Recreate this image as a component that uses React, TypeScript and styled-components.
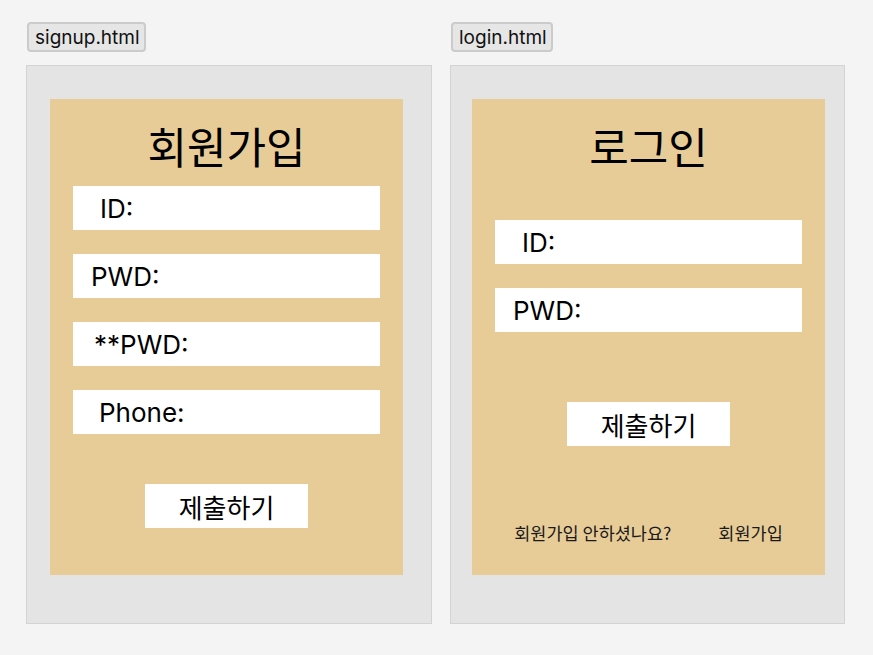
import React from "react";
import styled, { createGlobalStyle } from "styled-components";

const Global = createGlobalStyle`
  html, body { margin: 0; padding: 0; background: #f4f4f4; }
  body { font-family: "Inter", "Noto Sans CJK KR", sans-serif; color: #000; }
`;

const Page = styled.div`
  display: flex;
  gap: 18px;
  padding: 22px 0 0 26px;
  align-items: flex-start;
`;

const Column = styled.div<{ $w: number }>`
  display: flex;
  flex-direction: column;
  width: ${(p) => p.$w}px;
`;

const Tab = styled.div`
  align-self: flex-start;
  margin-left: 1px;
  height: 30px;
  box-sizing: border-box;
  padding: 0 4px 0 6px;
  display: flex;
  align-items: center;
  font-size: 19px;
  background: #e6e6e6;
  border: 2px solid #cbcbcb;
  border-radius: 4px;
  color: #111;
`;

const Panel = styled.div<{ $pl: number }>`
  margin-top: 13px;
  height: 559px;
  box-sizing: border-box;
  background: #e4e4e4;
  border: 1px solid #d3d3d3;
  padding: 33px 0 0 ${(p) => p.$pl - 1}px;
`;

const Card = styled.div`
  width: 353px;
  height: 476px;
  box-sizing: border-box;
  background: #e8cc98;
  padding: 22px 23px 0;
  display: flex;
  flex-direction: column;
`;

const Title = styled.div<{ $mb: number }>`
  font-family: "Noto Sans CJK KR", sans-serif;
  font-size: 43px;
  line-height: 48px;
  text-align: center;
  margin-bottom: ${(p) => p.$mb}px;
`;

const Fields = styled.div`
  display: flex;
  flex-direction: column;
  gap: 24px;
`;

const Field = styled.div<{ $pl: number }>`
  height: 44px;
  background: #fff;
  display: flex;
  align-items: center;
  padding-left: ${(p) => p.$pl}px;
  font-size: 26px;
`;

const Submit = styled.div<{ $mt: number }>`
  align-self: center;
  margin-top: ${(p) => p.$mt}px;
  width: 163px;
  height: 44px;
  background: #fff;
  display: flex;
  align-items: center;
  justify-content: center;
  font-family: "Noto Sans CJK KR", sans-serif;
  font-size: 26px;
`;

const Footer = styled.div`
  margin-top: 75px;
  display: flex;
  justify-content: center;
  gap: 47px;
  font-family: "Noto Sans CJK KR", sans-serif;
  font-size: 17.5px;
  line-height: 24px;
  color: #1a1a1a;
`;

export default function App() {
  return (
    <>
      <Global />
      <Page>
        <Column $w={406}>
          <Tab>signup.html</Tab>
          <Panel $pl={24}>
            <Card>
              <Title $mb={17}>회원가입</Title>
              <Fields>
                <Field $pl={27}>ID:</Field>
                <Field $pl={18}>PWD:</Field>
                <Field $pl={21}>**PWD:</Field>
                <Field $pl={26}>Phone:</Field>
              </Fields>
              <Submit $mt={50}>제출하기</Submit>
            </Card>
          </Panel>
        </Column>
        <Column $w={395}>
          <Tab>login.html</Tab>
          <Panel $pl={22}>
            <Card>
              <Title $mb={51}>로그인</Title>
              <Fields>
                <Field $pl={27}>ID:</Field>
                <Field $pl={18}>PWD:</Field>
              </Fields>
              <Submit $mt={70}>제출하기</Submit>
              <Footer>
                <span>회원가입 안하셨나요?</span>
                <span>회원가입</span>
              </Footer>
            </Card>
          </Panel>
        </Column>
      </Page>
    </>
  );
}
